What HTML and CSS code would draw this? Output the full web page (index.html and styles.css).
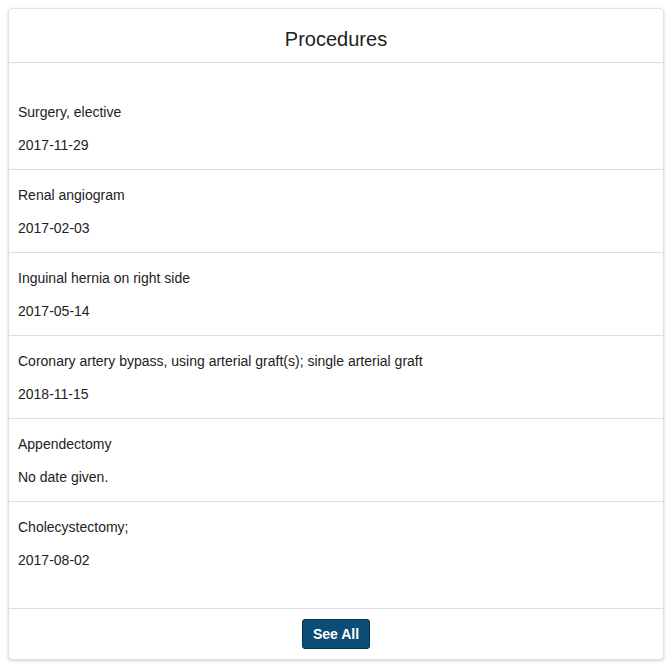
FILE: index.html
```html
<!DOCTYPE html>
<html lang="en">
<head>
<meta charset="utf-8">
<title>Procedures</title>
<link rel="stylesheet" href="styles.css">
</head>
<body>
<div class="card">
  <div class="card-header"><h2 class="card-title">Procedures</h2></div>
  <div class="card-body">
    <div class="item"><p class="item-name">Surgery, elective</p><p class="item-date">2017-11-29</p></div>
    <div class="item"><p class="item-name">Renal angiogram</p><p class="item-date">2017-02-03</p></div>
    <div class="item"><p class="item-name">Inguinal hernia on right side</p><p class="item-date">2017-05-14</p></div>
    <div class="item"><p class="item-name">Coronary artery bypass, using arterial graft(s); single arterial graft</p><p class="item-date">2018-11-15</p></div>
    <div class="item"><p class="item-name">Appendectomy</p><p class="item-date">No date given.</p></div>
    <div class="item"><p class="item-name">Cholecystectomy;</p><p class="item-date">2017-08-02</p></div>
  </div>
  <div class="card-footer"><button class="btn" type="button">See All</button></div>
</div>
</body>
</html>
```

FILE: styles.css
```css
html, body {
  margin: 0;
  padding: 0;
  background: #ffffff;
}
body {
  padding: 8px;
  font-family: "Liberation Sans", Arial, Helvetica, sans-serif;
  color: #222222;
  font-size: 14px;
  line-height: 20px;
}
.card {
  border: 1px solid #e2e2e2;
  border-radius: 4px;
  box-shadow: 0 1px 3px rgba(0, 0, 0, 0.18);
  background: #ffffff;
}
.card-header {
  padding: 19px 10px 11px;
  border-bottom: 1px solid #dddddd;
  text-align: center;
}
.card-title {
  margin: 0;
  font-size: 20px;
  line-height: 23px;
  font-weight: normal;
  color: #222222;
}
.card-body {
  padding: 23px 0 24px;
}
.item {
  padding: 15px 9px 14px;
  border-top: 1px solid #dddddd;
}
.item:first-child {
  border-top: none;
  padding-top: 16px;
}
.item p {
  margin: 0;
}
.item-name {
  margin-bottom: 13px !important;
}
.card-footer {
  border-top: 1px solid #dddddd;
  padding: 10px;
  display: flex;
  justify-content: center;
}
.btn {
  font-family: "Liberation Sans", Arial, Helvetica, sans-serif;
  font-size: 14px;
  font-weight: bold;
  line-height: 20px;
  color: #ffffff;
  background: #0b4d74;
  border: 1px solid #08334f;
  border-radius: 3px;
  padding: 4px 10px;
  height: 30px;
}
```
